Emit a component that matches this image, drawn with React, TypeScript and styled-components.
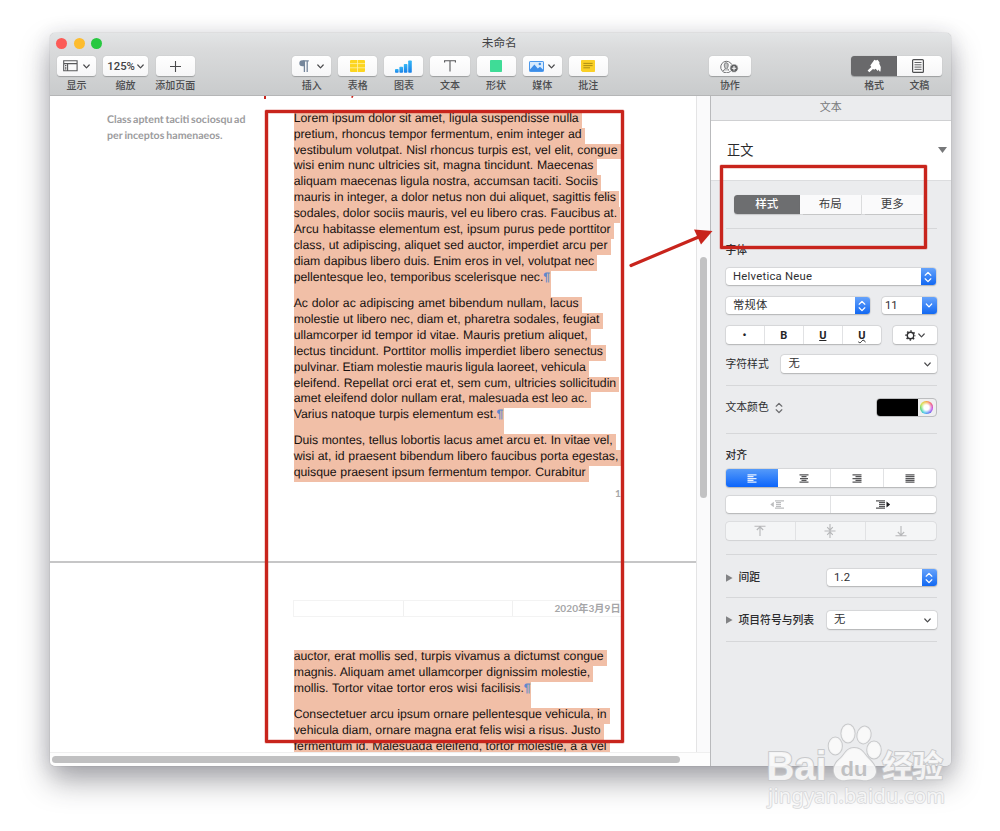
import React from "react";
import styled, { createGlobalStyle, css } from "styled-components";

const ui = `"Roboto", "Noto Sans CJK SC", sans-serif`;
const red = "#c8241c";

const GlobalStyle = createGlobalStyle`
  * { box-sizing: border-box; }
  body { margin: 0; background: #fff; overflow: hidden; font-family: ${ui}; color: #2b2b2d; }
  svg { display: block; }
`;

const Desktop = styled.main`
  position: relative;
  width: 1000px;
  height: 831px;
  padding: 33px 0 0 50px;
  overflow: hidden;
  background: #fff;
`;

const Window = styled.div`
  display: flex;
  flex-direction: column;
  width: 900.5px;
  height: 733px;
  border-radius: 5px;
  overflow: hidden;
  background: #ebecee;
  box-shadow: 0 0 1px rgba(0, 0, 0, 0.4), 0 15px 30px rgba(40, 40, 50, 0.4), 0 2px 20px rgba(40, 40, 70, 0.12);
`;

/* ---------- toolbar ---------- */

const Header = styled.header`
  flex: none;
  height: 63px;
  border-bottom: 1px solid #b5b6b7;
  background: linear-gradient(#e3e5e6, #dadbdc 25%, #c9cbcc);
`;

const TitleBar = styled.div`
  display: grid;
  grid-template-columns: 1fr auto 1fr;
  align-items: center;
  height: 23px;
  padding: 0 8px 2.5px 6px;
  font-size: 11.7px;
  line-height: 16px;
  color: #414244;
`;

const Lights = styled.div`
  display: flex;
  gap: 6.7px;
`;

const Light = styled.span<{ $color: string }>`
  width: 11px;
  height: 11px;
  border-radius: 50%;
  background: ${(p) => p.$color};
`;

const Tools = styled.div`
  display: flex;
  gap: 7px;
  padding-left: 7px;
`;

const Tool = styled.div<{ $w?: number; $push?: number }>`
  display: flex;
  flex-direction: column;
  align-items: center;
  width: ${(p) => p.$w ?? 39.1}px;
  margin-left: ${(p) => p.$push ?? 0}px;
`;

const ToolButton = styled.div<{ $gap?: number }>`
  display: flex;
  align-items: center;
  justify-content: center;
  gap: ${(p) => p.$gap ?? 5}px;
  width: 100%;
  height: 20px;
  border-radius: 3.5px;
  background: linear-gradient(#fff, #f6f6f7);
  box-shadow: 0 0.5px 1px rgba(0, 0, 0, 0.25);
  font-size: 11.3px;
  font-weight: 500;
  color: #414144;
`;

const ToolLabel = styled.span`
  margin-top: 3px;
  font-size: 10px;
  line-height: 14px;
  font-weight: 500;
  color: #4b4c4e;
  white-space: nowrap;
`;

const ModeSwitch = styled.div`
  display: grid;
  grid-template-columns: 46px 44.5px;
  margin-left: 93.5px;
`;

const Mode = styled.div<{ $active?: boolean }>`
  display: flex;
  flex-direction: column;
  align-items: center;
  ${ToolButton} {
    border-radius: ${(p) => (p.$active ? "3.5px 0 0 3.5px" : "0 3.5px 3.5px 0")};
    padding-right: ${(p) => (p.$active ? 0 : 2)}px;
    ${(p) => p.$active && css`background: #69696b;`}
  }
`;

/* ---------- document ---------- */

const Body = styled.div`
  display: flex;
  flex: 1;
  min-height: 0;
`;

const Editor = styled.section`
  display: flex;
  flex-direction: column;
  width: 660px;
  background: #fdfdfd;
`;

const Viewport = styled.div`
  display: flex;
  height: 657px;
  border-bottom: 1px solid #efefef;
`;

const Pages = styled.div`
  width: 647px;
  overflow: hidden;
  background: #fff;
  border-right: 1px solid #e4e4e5;
`;

const Track = styled.div`
  flex: 1;
  padding: 161px 3px 0;
  background: #fafafb;
`;

const Thumb = styled.div`
  height: 241px;
  border-radius: 4px;
  background: #c2c2c3;
`;

const BottomTrack = styled.div`
  flex: 1;
  padding: 3px 2px;
`;

const BottomThumb = styled.div`
  width: 628px;
  height: 7px;
  border-radius: 4px;
  background: #c0c0c1;
`;

const Sheet = styled.article<{ $first?: boolean }>`
  display: flex;
  padding: ${(p) => (p.$first ? "15.7px 0 0 57px" : "37.9px 0 0 243px")};
  height: ${(p) => (p.$first ? "466.5px" : "auto")};
  ${(p) => p.$first && css`border-bottom: 2px solid #c6c6c7;`}
`;

const SideNote = styled.aside`
  width: 186.7px;
  font-family: Lato, sans-serif;
  font-size: 10.6px;
  font-weight: 700;
  word-spacing: -1px;
  line-height: 16px;
  color: #9c9c9e;
  text-rendering: geometricPrecision;
`;

const NoteLine = styled.div<{ $w: number }>`
  width: ${(p) => p.$w}px;
  text-align-last: justify;
  white-space: nowrap;
`;

const Column = styled.div`
  width: 329px;
`;

const Paragraph = styled.div`
  display: flex;
  flex-direction: column;
  align-items: flex-start;
  font-family: "Liberation Sans", Arial, sans-serif;
  font-size: 12.28px;
  line-height: 12.4px;
  word-spacing: -0.8px;
  color: #17110f;
  text-rendering: geometricPrecision;
`;

const TextLine = styled.div<{ $w: number; $end?: boolean }>`
  width: ${(p) => p.$w + (p.$end ? 0.5 : 3.2)}px;
  height: ${(p) => (p.$end ? 26 : 15.93)}px;
  padding-right: ${(p) => (p.$end ? 0.5 : 3.2)}px;
  background: #f1bfa7;
  text-align-last: justify;
  white-space: nowrap;
`;

const Pilcrow = styled.span`
  font-weight: 700;
  color: #5f88cb;
`;

const PageNumber = styled.div`
  margin-top: 4px;
  padding-right: 2px;
  text-align: right;
  font: 700 10px/14px Lato, sans-serif;
  color: #a6a6a8;
`;

const PageHeader = styled.div`
  display: grid;
  grid-template-columns: 110px 109.5px 1fr;
  height: 17px;
  margin: 0 0 33px -1px;
  border: 1px solid #f3f3f3;
`;

const HeaderCell = styled.div`
  padding-right: 1px;
  border-right: 1px solid #f0f0f0;
  text-align: right;
  font: 700 10.1px/15px Lato, "Noto Sans CJK SC", sans-serif;
  letter-spacing: 0.1px;
  color: #a6a6a8;
  &:last-child { border-right: 0; }
`;

/* ---------- inspector ---------- */

const Inspector = styled.aside`
  flex: 1;
  border-left: 1px solid #b9babc;
  background: #ebecee;
`;

const PanelTitle = styled.div`
  height: 24.5px;
  border-bottom: 1px solid #cfd0d2;
  font-size: 11px;
  line-height: 23px;
  text-align: center;
  color: #77787a;
`;

const StyleName = styled.div`
  display: flex;
  align-items: center;
  justify-content: space-between;
  height: 60px;
  padding: 0 3.5px 1px 16px;
  border-bottom: 1px solid #dcdddf;
  background: #fff;
  font-size: 13.2px;
  color: #29292b;
`;

const Settings = styled.div`
  padding: 0 14px 0 14.5px;
`;

const Divider = styled.hr<{ $top: number }>`
  height: 1px;
  margin: ${(p) => p.$top}px 0 0;
  border: 0;
  background: #d6d7d9;
`;

const Row = styled.div<{ $top: number; $h?: number }>`
  display: flex;
  align-items: center;
  justify-content: space-between;
  height: ${(p) => p.$h ?? 18}px;
  margin-top: ${(p) => p.$top}px;
`;

const Label = styled.span<{ $strong?: boolean }>`
  display: flex;
  align-items: center;
  gap: 6px;
  font-size: 10.8px;
  line-height: 17px;
  font-weight: ${(p) => (p.$strong ? 500 : 400)};
  color: #2c2c2e;
  white-space: nowrap;
`;

const Field = styled.div<{ $w: number }>`
  display: flex;
  align-items: center;
  justify-content: space-between;
  width: ${(p) => p.$w}px;
  height: 17.5px;
  padding-left: 7.5px;
  border-radius: 3px;
  overflow: hidden;
  background: #fff;
  box-shadow: 0 0 0 0.5px rgba(0, 0, 0, 0.1), 0 0.5px 1.5px rgba(0, 0, 0, 0.2);
  font-size: 11.3px;
  line-height: 16px;
  letter-spacing: 0.25px;
  color: #303032;
  > svg { margin-right: 6px; }
`;

const NumberField = styled(Field)`
  padding-left: 3px;
  letter-spacing: 0;
`;

const BlueCap = styled.span`
  display: grid;
  place-items: center;
  width: 15px;
  height: 100%;
  background: linear-gradient(#66a3fb, #1268f2);
`;

const Segments = styled.div<{ $w: number; $dim?: boolean }>`
  display: flex;
  width: ${(p) => p.$w}px;
  height: 17.5px;
  border-radius: 3px;
  overflow: hidden;
  background: ${(p) => (p.$dim ? "#f4f5f6" : "#fff")};
  box-shadow: 0 0 0 0.5px rgba(0, 0, 0, 0.1), 0 0.5px 1.5px rgba(0, 0, 0, ${(p) => (p.$dim ? 0.06 : 0.2)});
`;

const Segment = styled.div<{ $fill?: "blue" }>`
  display: flex;
  align-items: center;
  justify-content: center;
  gap: 2px;
  flex: 1;
  border-right: 1px solid #e1e2e4;
  font: 700 11px/17px Roboto, sans-serif;
  color: #252527;
  &:last-child { border-right: 0; }
  ${(p) => p.$fill === "blue" && css`background: linear-gradient(#559af9, #0c65fb); border: 0;`}
`;

const Underlined = styled.span<{ $wavy?: boolean }>`
  text-decoration: underline ${(p) => (p.$wavy ? "wavy" : "solid")} 1px;
  text-decoration-skip-ink: none;
  text-underline-offset: ${(p) => (p.$wavy ? 0 : 1)}px;
`;

const Tabs = styled.div`
  display: grid;
  grid-template-columns: 66.3px 62px 61px;
  height: 18.5px;
  margin: 14px 0 0 8px;
`;

const Tab = styled.div<{ $active?: boolean }>`
  border-right: 1px solid #dedfe0;
  background: ${(p) => (p.$active ? "#6d6e70" : "#fafafb")};
  color: ${(p) => (p.$active ? "#fff" : "#3c3c3e")};
  font-size: 11.5px;
  font-weight: ${(p) => (p.$active ? 500 : 400)};
  line-height: 19px;
  text-align: center;
  box-shadow: 0 0.5px 1px rgba(0, 0, 0, 0.16);
  &:first-child { border-radius: 3.5px 0 0 3.5px; border-right: 0; }
  &:last-child { border-right: 0; }
`;

const ColorWell = styled.div`
  display: grid;
  grid-template-columns: 40.5px 18px;
  height: 19px;
  border: 0.5px solid #bcbdbf;
  border-radius: 4px;
  overflow: hidden;
  background: #efeff0;
  place-items: center;
`;

const Swatch = styled.span`
  width: 100%;
  height: 100%;
  background: #000;
`;

const Wheel = styled.span`
  width: 12.5px;
  height: 12.5px;
  border-radius: 50%;
  background: radial-gradient(circle, #fff 28%, rgba(255, 255, 255, 0) 68%),
    conic-gradient(#f5a83c, #f0567a, #c34be8, #5a72f2, #3fc6ee, #52d66b, #d6e043, #f5a83c);
`;

/* ---------- markup layers ---------- */

const Frame = styled.div<{ $x: number; $y: number; $w: number; $h: number }>`
  position: absolute;
  left: ${(p) => p.$x}px;
  top: ${(p) => p.$y}px;
  width: ${(p) => p.$w}px;
  height: ${(p) => p.$h}px;
  border: 3px solid ${red};
  border-radius: 1px;
  box-shadow: 0 0 0 0.5px rgba(200, 36, 28, 0.4), inset 0 0 0 0.5px rgba(200, 36, 28, 0.4);
`;

const Layer = styled.svg`
  position: absolute;
  left: 0;
  top: 0;
  pointer-events: none;
`;

const Chevron = ({ color = "#4a4a4c", w = 7 }: { color?: string; w?: number }) => (
  <svg width={w} height="5" viewBox="0 0 7 5" fill="none" stroke={color} strokeWidth="1.2" strokeLinecap="round" strokeLinejoin="round">
    <path d="M.8 1 3.5 3.8 6.2 1" />
  </svg>
);

const UpDown = ({ color = "#fff" }: { color?: string }) => (
  <svg width="8" height="12" viewBox="0 0 8 12" fill="none" stroke={color} strokeWidth="1.25" strokeLinecap="round" strokeLinejoin="round">
    <path d="M1.2 4.2 4 1.4l2.8 2.8M1.2 7.8 4 10.6l2.8-2.8" />
  </svg>
);

const Disclosure = () => (
  <svg width="7" height="8" viewBox="0 0 7 8"><path d="M0 .3 6.6 4 0 7.7z" fill="#828385" /></svg>
);

const AlignIcon = ({ rows, color = "#555557" }: { rows: [number, number][]; color?: string }) => (
  <svg width="10" height="9" viewBox="0 0 10 9" stroke={color} strokeWidth="1.25">
    {rows.map(([a, b], i) => <path key={i} d={`M${a} ${0.8 + i * 1.85}H${b}`} />)}
  </svg>
);

const IndentIcon = ({ out }: { out?: boolean }) => (
  <svg width="15" height="9" viewBox="0 0 15 9" stroke={out ? "#bcbdbf" : "#555557"} strokeWidth="1.2">
    {out ? (
      <><path d="M5 .8h9M6 2.65h5M6 4.5h5M6 6.35h5M5 8.2h9" /><path d="M3.8 1.8v5.4L.3 4.5z" fill="#bcbdbf" stroke="none" /></>
    ) : (
      <><path d="M0 .8h9M3 2.65h6M3 4.5h6M3 6.35h6M0 8.2h9" /><path d="M10.5 1.5v6l3.7-3z" fill="#1d1d1f" stroke="none" /></>
    )}
  </svg>
);

const VerticalIcon = ({ kind }: { kind: "top" | "middle" | "bottom" }) => (
  <svg width="12" height="14" viewBox="0 0 12 14" fill="none" stroke="#b6b7b9" strokeWidth="1.1">
    {kind === "top" && <path d="M.5 2.2h11M6 12V2.8M2.8 6 6 2.8 9.2 6" />}
    {kind === "middle" && <path d="M.5 7h11M6 0v14M3.2 3.2 6 6.2l2.8-3M3.2 10.8 6 7.8l2.8 3" />}
    {kind === "bottom" && <path d="M.5 11.8h11M6 2v9.2M2.8 8 6 11.2 9.2 8" />}
  </svg>
);

const GearIcon = () => (
  <svg width="11" height="11" viewBox="0 0 11 11" fill="none" stroke="#303032">
    <circle cx="5.5" cy="5.5" r="3.2" strokeWidth="1.4" />
    <circle cx="5.5" cy="5.5" r="4.4" strokeWidth="1.5" strokeDasharray="1.5 1.956" strokeDashoffset=".75" />
  </svg>
);

type Line = [string, number];
const firstPage: Line[][] = [
  [
    ["Lorem ipsum dolor sit amet, ligula suspendisse nulla", 285],
    ["pretium, rhoncus tempor fermentum, enim integer ad", 288],
    ["vestibulum volutpat. Nisl rhoncus turpis est, vel elit, congue", 323.8],
    ["wisi enim nunc ultricies sit, magna tincidunt. Maecenas", 299.8],
    ["aliquam maecenas ligula nostra, accumsan taciti. Sociis", 304.2],
    ["mauris in integer, a dolor netus non dui aliquet, sagittis felis", 322.2],
    ["sodales, dolor sociis mauris, vel eu libero cras. Faucibus at.", 323.5],
    ["Arcu habitasse elementum est, ipsum purus pede porttitor", 317],
    ["class, ut adipiscing, aliquet sed auctor, imperdiet arcu per", 313.8],
    ["diam dapibus libero duis. Enim eros in vel, volutpat nec", 300.5],
    ["pellentesque leo, temporibus scelerisque nec.¶", 256.5],
  ],
  [
    ["Ac dolor ac adipiscing amet bibendum nullam, lacus", 285],
    ["molestie ut libero nec, diam et, pharetra sodales, feugiat", 305.8],
    ["ullamcorper id tempor id vitae. Mauris pretium aliquet,", 294],
    ["lectus tincidunt. Porttitor mollis imperdiet libero senectus", 309.3],
    ["pulvinar. Etiam molestie mauris ligula laoreet, vehicula", 292.2],
    ["eleifend. Repellat orci erat et, sem cum, ultricies sollicitudin", 322.5],
    ["amet eleifend dolor nullam erat, malesuada est leo ac.", 293.8],
    ["Varius natoque turpis elementum est.¶", 209.7],
  ],
  [
    ["Duis montes, tellus lobortis lacus amet arcu et. In vitae vel,", 319],
    ["wisi at, id praesent bibendum libero faucibus porta egestas,", 324.6],
    ["quisque praesent ipsum fermentum tempor. Curabitur", 292],
  ],
];
const secondPage: Line[][] = [
  [
    ["auctor, erat mollis sed, turpis vivamus a dictumst congue", 310],
    ["magnis. Aliquam amet ullamcorper dignissim molestie,", 296.5],
    ["mollis. Tortor vitae tortor eros wisi facilisis.¶", 237],
  ],
  [
    ["Consectetuer arcu ipsum ornare pellentesque vehicula, in", 312.8],
    ["vehicula diam, ornare magna erat felis wisi a risus. Justo", 306.8],
    ["fermentum id. Malesuada eleifend, tortor molestie, a a vel", 312.8],
  ],
];

const Copy = ({ paragraphs }: { paragraphs: Line[][] }) => (
  <>
    {paragraphs.map((lines, i) => (
      <Paragraph key={i}>
        {lines.map(([text, w]) => {
          const end = text.endsWith("¶");
          return (
            <TextLine key={text} $w={w} $end={end}>
              {end ? <>{text.slice(0, -1)}<Pilcrow>¶</Pilcrow></> : text}
            </TextLine>
          );
        })}
      </Paragraph>
    ))}
  </>
);

const Toolbar = () => (
  <Header>
    <TitleBar>
      <Lights><Light $color="#fc5b57" /><Light $color="#fdbc2e" /><Light $color="#28c840" /></Lights>
      <span>未命名</span>
    </TitleBar>
    <Tools>
      <Tool>
        <ToolButton>
          <svg width="15" height="12" viewBox="0 0 15 12" fill="none" stroke="#58595b" strokeWidth="1.1"><path d="M.7.7h13.4v10H.7zM.7 3.6h13.4M4.6 3.6v7.1M2 5.5h1.4M2 7.2h1.4M2 8.9h1.4" /></svg>
          <Chevron />
        </ToolButton>
        <ToolLabel>显示</ToolLabel>
      </Tool>
      <Tool $w={45}>
        <ToolButton $gap={2}>125%<Chevron /></ToolButton>
        <ToolLabel>缩放</ToolLabel>
      </Tool>
      <Tool $push={0.6}>
        <ToolButton><svg width="11" height="11" viewBox="0 0 11 11" stroke="#4a4a4c" strokeWidth="1.1"><path d="M0 5.5h11M5.5 0v11" /></svg></ToolButton>
        <ToolLabel>添加页面</ToolLabel>
      </Tool>
      <Tool $push={90.4}>
        <ToolButton $gap={8}>
          <svg width="10" height="12" viewBox="0 0 10 12" fill="none" stroke="#75869b" strokeWidth="1.3"><path d="M9.8.8H4.2M5.4.6V12M8.2.6V12" /><path d="M5.4.2H3.3a3 3 0 0 0 0 6h2.1z" fill="#75869b" stroke="none" /></svg>
          <Chevron />
        </ToolButton>
        <ToolLabel>插入</ToolLabel>
      </Tool>
      <Tool>
        <ToolButton><svg width="15" height="12" viewBox="0 0 15 12"><rect width="15" height="12" rx="1" fill="#fcd51f" /><path d="M0 3.6h15M0 7.8h15M7.5 0v12" stroke="#fff1ae" strokeWidth=".8" /></svg></ToolButton>
        <ToolLabel>表格</ToolLabel>
      </Tool>
      <Tool>
        <ToolButton>
          <svg width="17" height="13" viewBox="0 0 17 13">
            <defs><linearGradient id="bars" x1="0" y1="0" x2="0" y2="1"><stop stopColor="#35b8f6" /><stop offset="1" stopColor="#167ee8" /></linearGradient></defs>
            <g fill="url(#bars)"><rect y="9" width="3.6" height="3.8" rx=".8" /><rect x="4.4" y="6.8" width="3.6" height="6" rx=".8" /><rect x="8.8" y="4" width="3.6" height="8.8" rx=".8" /><rect x="13.2" y=".4" width="3.6" height="12.4" rx=".8" /></g>
          </svg>
        </ToolButton>
        <ToolLabel>图表</ToolLabel>
      </Tool>
      <Tool>
        <ToolButton><svg width="12" height="12" viewBox="0 0 12 12" fill="none" stroke="#555658" strokeWidth="1.1"><path d="M.6 2.4V.8h10.8v1.6M6 .8v10.7" /></svg></ToolButton>
        <ToolLabel>文本</ToolLabel>
      </Tool>
      <Tool>
        <ToolButton><svg width="12" height="12" viewBox="0 0 12 12"><rect width="12" height="12" rx=".8" fill="#3fdc97" /></svg></ToolButton>
        <ToolLabel>形状</ToolLabel>
      </Tool>
      <Tool>
        <ToolButton $gap={4}>
          <svg width="15" height="11" viewBox="0 0 15 11"><rect x=".5" y=".5" width="14" height="10" rx=".6" fill="#d6eafd" stroke="#4b98ec" /><path d="M1 8.4 5.4 3.6l3.4 4L11 5.7l3.2 3V10H1z" fill="#3c8de8" /><circle cx="10.8" cy="3" r="1.2" fill="#3c8de8" /></svg>
          <Chevron />
        </ToolButton>
        <ToolLabel>媒体</ToolLabel>
      </Tool>
      <Tool>
        <ToolButton><svg width="14" height="12" viewBox="0 0 14 12"><path d="M.8 0h12.4q.8 0 .8.8v10.4q0 .8-.8.8H1.5L0 10.800V.8Q0 0 .8 0z" fill="#fad027" /><path d="M2.4 3.400h9.200M2.400 5.600h9.200M2.400 7.800H9" stroke="#a58712" strokeWidth=".9" /></svg></ToolButton>
        <ToolLabel>批注</ToolLabel>
      </Tool>
      <Tool $w={41.5} $push={94.3}>
        <ToolButton>
          <svg width="19" height="13" viewBox="0 0 19 13" fill="none" stroke="#707173" strokeWidth="1">
            <path d="M10.8 11A5.8 5.8 0 1 1 12 5.2" />
            <path d="M3.4 10.8c.3-1.4 1.6-1.4 2-2.3-1-1.5-1.2-2.8-1-4.2.3-2 3.4-2 3.7 0 .2 1.4-.1 2.7-1 4.2.3.9 1.4.9 1.9 1.9" fill="#c4c5c6" />
            <circle cx="14" cy="8.2" r="4.2" fill="#606163" stroke="#fff" strokeWidth=".8" />
            <path d="M14 6v4.4M11.8 8.2h4.4" stroke="#fff" strokeWidth="1.1" />
          </svg>
        </ToolButton>
        <ToolLabel>协作</ToolLabel>
      </Tool>
      <ModeSwitch>
        <Mode $active>
          <ToolButton>
            <svg width="14" height="14" viewBox="0 0 14 14" fill="#fff"><path d="M7.4.8 9 1.6l1.5-.8 2 2.5-.2 1.5 1.5 3.2-.3 4.5-1.2-.3-.5-1.7-1 1.5-2.3-2.2-1.2 1-1.3-.9-3.7 3.4L.6 11.5 4.3 8l-1-1.500z" /></svg>
          </ToolButton>
          <ToolLabel>格式</ToolLabel>
        </Mode>
        <Mode>
          <ToolButton><svg width="12" height="14" viewBox="0 0 12 14" fill="none" stroke="#4f5052"><rect x=".6" y=".6" width="10.8" height="12.8" rx="1" strokeWidth="1.2" /><path d="M2.5 3.5h7M2.5 5.8h7M2.5 8.1h7M2.5 10.4h7" strokeWidth=".9" /></svg></ToolButton>
          <ToolLabel>文稿</ToolLabel>
        </Mode>
      </ModeSwitch>
    </Tools>
  </Header>
);

const FormatPanel = () => (
  <Inspector>
    <PanelTitle>文本</PanelTitle>
    <StyleName>正文<svg width="9" height="6" viewBox="0 0 9 6"><path d="M0 0h9L4.5 6z" fill="#77787a" /></svg></StyleName>
    <Settings>
      <Tabs><Tab $active>样式</Tab><Tab>布局</Tab><Tab>更多</Tab></Tabs>
      <Divider $top={15} />
      <Row $top={13.5} $h={16}><Label $strong>字体</Label></Row>
      <Row $top={9}><Field $w={210}>Helvetica Neue<BlueCap><UpDown /></BlueCap></Field></Row>
      <Row $top={11}>
        <Field $w={144}>常规体<BlueCap><UpDown /></BlueCap></Field>
        <NumberField $w={54.5}>11<BlueCap><Chevron color="#fff" w={8} /></BlueCap></NumberField>
      </Row>
      <Row $top={11.5}>
        <Segments $w={155.5}>
          <Segment>•</Segment><Segment>B</Segment><Segment><Underlined>U</Underlined></Segment><Segment><Underlined $wavy>U</Underlined></Segment>
        </Segments>
        <Segments $w={43.5}><Segment><GearIcon /><Chevron /></Segment></Segments>
      </Row>
      <Row $top={11}><Label>字符样式</Label><Field $w={155.5}>无<Chevron /></Field></Row>
      <Divider $top={12} />
      <Row $top={12} $h={19}>
        <Label>文本颜色<UpDown color="#6b6c6e" /></Label>
        <ColorWell><Swatch /><Wheel /></ColorWell>
      </Row>
      <Divider $top={16} />
      <Row $top={13.5} $h={16}><Label $strong>对齐</Label></Row>
      <Row $top={5.5}>
        <Segments $w={210}>
          <Segment $fill="blue"><AlignIcon color="#e6f0ff" rows={[[0.5, 9.5], [0.5, 6.5], [0.5, 9.5], [0.5, 6.5], [0.5, 9.5]]} /></Segment>
          <Segment><AlignIcon rows={[[0.5, 9.5], [2.5, 7.5], [1, 9], [2.5, 7.5], [0.5, 9.5]]} /></Segment>
          <Segment><AlignIcon rows={[[0.5, 9.5], [3.5, 9.5], [0.5, 9.5], [3.5, 9.5], [0.5, 9.5]]} /></Segment>
          <Segment><AlignIcon rows={[[0.5, 9.5], [0.5, 9.5], [0.5, 9.5], [0.5, 9.5], [0.5, 9.5]]} /></Segment>
        </Segments>
      </Row>
      <Row $top={8.5}><Segments $w={210}><Segment><IndentIcon out /></Segment><Segment><IndentIcon /></Segment></Segments></Row>
      <Row $top={8.5}>
        <Segments $w={210} $dim><Segment><VerticalIcon kind="top" /></Segment><Segment><VerticalIcon kind="middle" /></Segment><Segment><VerticalIcon kind="bottom" /></Segment></Segments>
      </Row>
      <Divider $top={13.5} />
      <Row $top={14}><Label $strong><Disclosure />间距</Label><Field $w={110}>1.2<BlueCap><UpDown /></BlueCap></Field></Row>
      <Divider $top={10} />
      <Row $top={13.5}><Label $strong><Disclosure />项目符号与列表</Label><Field $w={110}>无<Chevron /></Field></Row>
      <Divider $top={12} />
    </Settings>
  </Inspector>
);

const Watermark = () => (
  <Layer width="1000" height="831" viewBox="0 0 1000 831">
    <g fill="#fafafa" fillOpacity=".88" stroke="#c8c9cb" strokeWidth="2" paintOrder="stroke" strokeLinejoin="round">
      <text x="766.5" y="780" fontFamily="Liberation Sans, sans-serif" fontWeight="700" fontSize="40" textLength="60" lengthAdjust="spacingAndGlyphs">Bai</text>
      <ellipse cx="835.3" cy="746" rx="6.6" ry="8.5" />
      <ellipse cx="848" cy="733.5" rx="6.6" ry="9" />
      <ellipse cx="864" cy="735" rx="6.6" ry="8.5" transform="rotate(12 864 735)" />
      <ellipse cx="874" cy="750" rx="6.8" ry="8.5" />
      <path d="M854 748c-7 0-9 6-13 10-4 3-8 8-7 14 1 7 7 9 12 8 5-1 11-1 16 0 6 1 13-1 14-8 0-6-4-10-8-14-4-4-6-10-14-10z" />
      <text x="840.5" y="775.5" fill="#b9babc" stroke="none" fontFamily="Liberation Sans, sans-serif" fontWeight="700" fontSize="21" textLength="27" lengthAdjust="spacingAndGlyphs">du</text>
      <text x="882" y="777" fontFamily="Noto Sans CJK SC, sans-serif" fontWeight="700" fontSize="31" textLength="61">经验</text>
      <text x="768" y="803" fontFamily="Noto Sans, sans-serif" fontSize="20" textLength="177" strokeWidth="1.6" stroke="#d6d7d9">jingyan.baidu.com</text>
    </g>
  </Layer>
);

const HeaderColumn = styled(Column)`
  margin-left: 0.7px;
`;

export default function App() {
  return (
    <Desktop>
      <GlobalStyle />
      <Window>
        <Toolbar />
        <Body>
          <Editor>
            <Viewport>
              <Pages>
                <Sheet $first>
                  <SideNote>
                    <NoteLine $w={138.5}>Class aptent taciti sociosqu ad</NoteLine>
                    <NoteLine $w={115.5}>per inceptos hamenaeos.</NoteLine>
                  </SideNote>
                  <Column>
                    <Copy paragraphs={firstPage} />
                    <PageNumber>1</PageNumber>
                  </Column>
                </Sheet>
                <Sheet>
                  <HeaderColumn>
                    <PageHeader><HeaderCell /><HeaderCell /><HeaderCell>2020年3月9日</HeaderCell></PageHeader>
                    <Copy paragraphs={secondPage} />
                  </HeaderColumn>
                </Sheet>
              </Pages>
              <Track><Thumb /></Track>
            </Viewport>
            <BottomTrack><BottomThumb /></BottomTrack>
          </Editor>
          <FormatPanel />
        </Body>
      </Window>
      <Frame $x={264.5} $y={109.5} $w={359} $h={633} />
      <Frame $x={719.5} $y={165} $w={207.5} $h={83.5} />
      <Layer width="1000" height="831" viewBox="0 0 1000 831">
        <path d="M631 265.5 701 236" stroke={red} strokeWidth="3.2" strokeLinecap="round" />
        <path d="M712.5 231 694 229.5 701 244.5z" fill={red} />
        <path d="M264 96h2v3h-2zM351.5 96h2l-1 2h-1z" fill={red} />
      </Layer>
      <Watermark />
    </Desktop>
  );
}
